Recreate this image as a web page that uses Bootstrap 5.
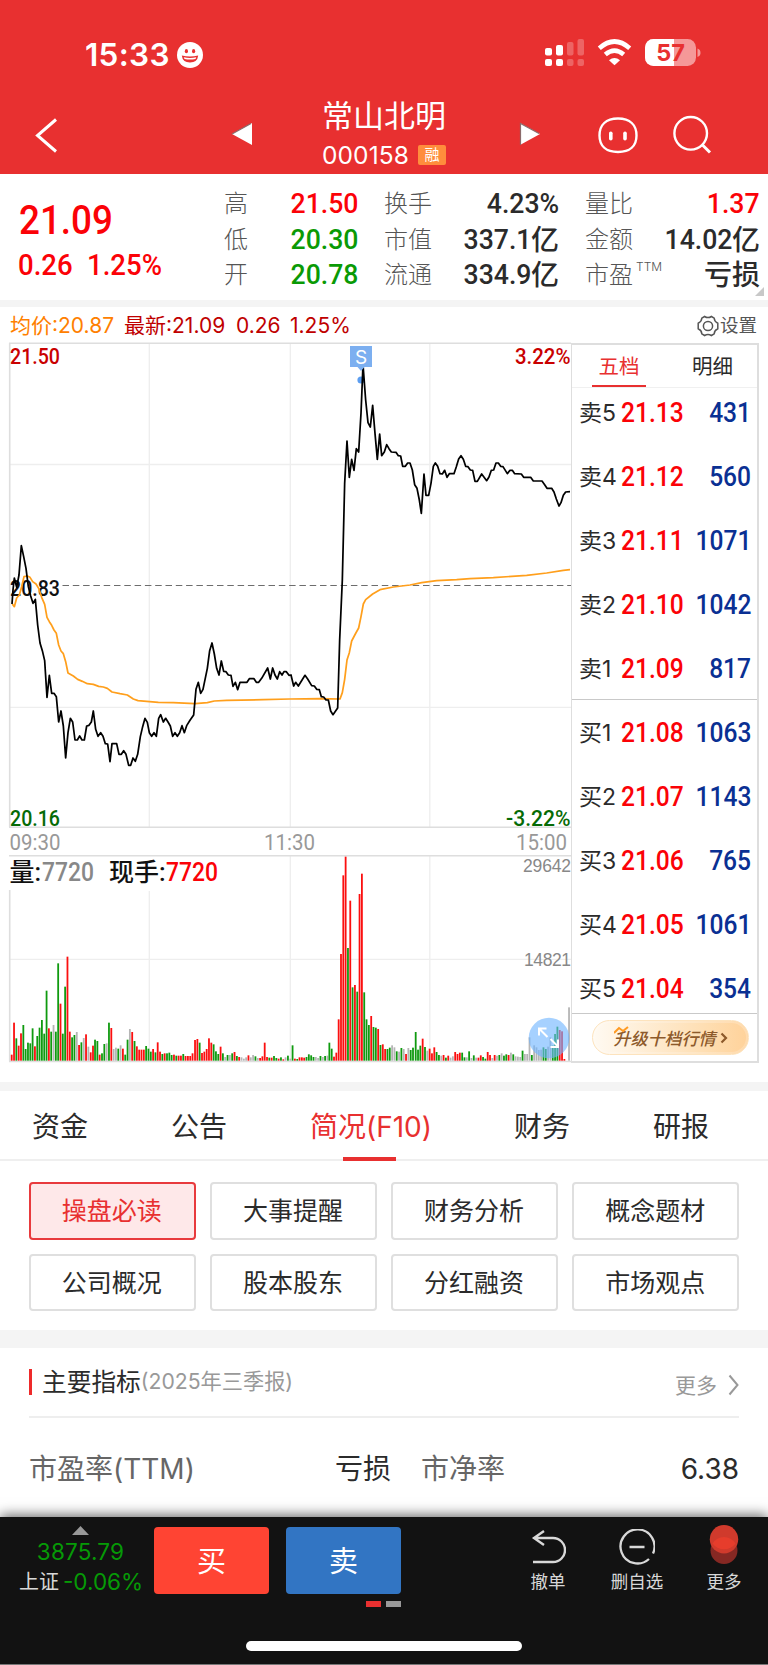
<!DOCTYPE html>
<html lang="zh-CN">
<head>
<meta charset="utf-8">
<meta name="viewport" content="width=device-width, initial-scale=1">
<title>常山北明 000158</title>
<link href="https://cdn.jsdelivr.net/npm/bootstrap@5.3.0/dist/css/bootstrap.min.css" rel="stylesheet">
<style>
  body { font-family: Inter, "Noto Sans CJK SC", sans-serif; color: #2b2b2b; background: #fff; width: 768px; height: 1665px; overflow: hidden; line-height: 1; }
  svg { display: block; flex: none; }
  svg text { font-family: Roboto, "Noto Sans CJK SC", sans-serif; }
  .din { font-family: Roboto, "Noto Sans CJK SC", sans-serif; font-weight: 500; display: inline-block; transform: scaleX(.95); transform-origin: right; white-space: nowrap; }
  .din-left { transform-origin: left; }
  .up { color: #fb0207; }
  .down { color: #0a9a05; }
  .topbar { height: 174px; background: #e83030; color: #fff; }
  .statusbar { height: 98px; padding: 3px 67px 0 85px; }
  .clock { font-size: 31.5px; font-weight: 600; letter-spacing: .3px; }
  .titlebar { height: 76px; }
  .stock-name { font-size: 31px; line-height: 36px; }
  .stock-code { font-size: 24.5px; line-height: 28px; letter-spacing: .1px; margin-top: 7px; }
  .margin-tag { width: 28px; height: 20px; background: #ff8d3c; border-radius: 2px; font-size: 15px; line-height: 19px; letter-spacing: 0; text-align: center; }
  .quote { height: 126px; }
  .price-now { font-size: 40px; line-height: 40px; font-weight: 500; transform: scaleX(.92); }
  .price-chg { font-size: 29px; line-height: 28px; }
  .stat-grid { display: grid; grid-template-columns: 134px 175px 175px; grid-auto-rows: 35.7px; column-gap: 26px; margin-top: 12px; }
  .stat-grid > div { display: flex; justify-content: space-between; align-items: center; white-space: nowrap; }
  .stat-grid .lbl { font-size: 24px; color: #555; font-weight: 300; }
  .stat-grid .val { font-size: 28px; font-weight: 500; display: flex; align-items: center; }
  .ttm { font-size: 12px; position: relative; top: -12px; margin-left: 3px; }
  .strip { background: #f4f4f4; }
  .chartinfo { height: 33px; font-size: 21px; padding: 4px 11px 0 10px; }
  .chart-row { height: 725px; }
  .book { width: 188px; height: 720px; margin-top: 3px; border: 2px solid #dedede; border-left-width: 1px; }
  .book-tabs { height: 43px; border-bottom: 1px solid #f0f0f0; font-size: 20.5px; }
  .book-tabs .on { color: #e83030; border-bottom: 2px solid #e83030; width: 54px; height: 42px; }
  .book-tabs span { line-height: 43px; text-align: center; }
  .book-half { height: 312px; border-bottom: 1px solid #c9c9c9; }
  .book-line { height: 64.1px; padding: 2px 6px 0 7px; }
  .book-line .who { width: 42px; font-size: 23px; }
  .book-line .din { font-size: 27px; transform: scaleX(.91); }
  .qty { color: #0a3093; }
  .upgrade { width: 157px; height: 35px; border-radius: 18px; background: linear-gradient(90deg,#fffaf2,#fedfb4 70%,#ffd29a); border: 1px solid #fde3bd; color: #8d5a2b; font-size: 17px; font-weight: 500; box-shadow: inset 0 0 0 2px #fff3; }
  .seg-tabs { height: 70px; border-bottom: 2px solid #efefef; font-size: 28px; display: grid; grid-template-columns: 120px 158px 186px 156px 122px; padding-left: 0; }
  .seg-tabs span { display: flex; justify-content: center; align-items: center; position: relative; height: 69px; padding-top: 3px; white-space: nowrap; }
  .seg-tabs .on { color: #e83030; }
  .seg-tabs .on::after { content: ""; position: absolute; left: 50%; margin-left: -28px; bottom: -1px; width: 53px; height: 4px; background: #e83030; }
  .pills { display: grid; grid-template-columns: repeat(4, 1fr); gap: 14px 14.5px; padding: 21px 29px 0; height: 169px; align-content: start; }
  .pills .btn { height: 57.5px; border: 2px solid #dfdfdf; border-radius: 4px; font-size: 25px; line-height: 1; padding: 2px 1px 0 0; color: #2b2b2b; background: #fff; }
  .pills .btn.on { border-color: #e83a3d; background: #fee8e9; color: #e83030; }
  .sec-head { height: 70px; margin: 0 29px; border-bottom: 2px solid #eee; }
  .redbar { width: 3px; height: 26px; background: #ee2a2a; }
  .metric { height: 99px; padding: 2px 29px 0; font-size: 28px; }
  .soft { color: #666; }
  .bottombar { height: 148px; background: #121212; box-shadow: 0 -2px 12px rgba(0,0,0,.6); position: relative; color: #d8d8d8; border-bottom: 1px solid #777; }
  .idx { width: 154px; font-size: 22.5px; }
  .trade { width: 115px; height: 67px; border-radius: 4px; color: #fff; font-size: 29px; line-height: 69px; text-align: center; }
  .tool { font-size: 17.5px; white-space: nowrap; }
  .home { width: 276px; height: 10px; border-radius: 5px; background: #fff; }
</style>
</head>
<body>
<header class="topbar">
  <div class="statusbar d-flex align-items-center justify-content-between">
    <div class="d-flex align-items-center pt-2">
      <span class="clock">15:33</span>
      <svg style="margin-left:7px" width="26" height="26" viewBox="0 0 26 26"><circle cx="13" cy="13" r="13" fill="#fff"/><ellipse cx="9.400" cy="9.200" rx="1.600" ry="2.100" fill="#e83030"/><ellipse cx="16.600" cy="9.200" rx="1.600" ry="2.100" fill="#e83030"/><path d="M4.800 13.500q8.200 1.800 16.400 0q-.8 7-8.200 7t-8.200-7z" fill="#e83030"/><path d="M6.700 15.300q6.300 1.200 12.600 0l-.8 1.800q-5.500 1-11 0z" fill="#fff"/></svg>
    </div>
    <svg class="mt-1" width="156" height="28" viewBox="545 38 156 28">
      <g fill="#fff"><rect x="545" y="47" width="7" height="7.500" rx="2"/><rect x="556" y="44" width="7" height="10.500" rx="2"/><rect x="545" y="58" width="7" height="7" rx="2"/><rect x="556" y="58" width="7" height="7" rx="2"/>
      <g opacity=".25"><rect x="567" y="41" width="6.500" height="13.500" rx="2"/><rect x="577.500" y="38" width="6.500" height="16.500" rx="2"/><rect x="567" y="58" width="6.500" height="7" rx="2"/><rect x="577.500" y="58" width="6.500" height="7" rx="2"/></g></g>
      <g fill="none" stroke="#fff" stroke-width="4.600"><path d="M599.300 47.200Q614.500 33.800 629.700 47.200"/><path d="M605.300 53.600Q614.500 45.600 623.700 53.600"/></g>
      <path d="M609 59.200q5.500-4.600 11 0l-5.500 5z" fill="#fff"/>
      <rect x="645" y="38" width="51" height="27" rx="8.500" fill="#f59898"/><path d="M674 38v27h-20.500a8.500 8.500 0 0 1-8.500-8.500v-10a8.500 8.500 0 0 1 8.500-8.500z" fill="#fff"/><path d="M697.500 47.500q3 1 3 4.200t-3 4.200z" fill="#f59898"/>
      <text x="670.500" y="60" text-anchor="middle" font-size="23.500" font-weight="700" fill="#e83030" style="font-family:Inter">57</text>
    </svg>
  </div>
  <div class="titlebar d-flex">
    <svg width="300" height="76" viewBox="0 98 300 76"><path d="M56 119.500L37.500 135.500L56 151.500" fill="none" stroke="#fff" stroke-width="3"/><path d="M232 134L252 123V145z" fill="#fff"/><path d="M232 134L251 123.500" stroke="#8b6a6a" stroke-width="1.200"/></svg>
    <div class="text-center" style="width:168px">
      <div class="stock-name">常山北明</div>
      <div class="stock-code d-flex justify-content-center align-items-center" style="gap:9px"><span>000158</span><span class="margin-tag">融</span></div>
    </div>
    <svg width="300" height="76" viewBox="468 98 300 76"><path d="M520 123L540 134L520 145z" fill="#fff"/><path d="M520.500 145V123.500L539 133.500" fill="none" stroke="#8b6a6a" stroke-width="1.200"/>
      <g fill="none" stroke="#fff" stroke-width="2.400"><path d="M618 118.500c12 0 18.500 6.500 18.500 17S630 152 618 152s-18.500-6-18.500-16.500 6.500-17 18.500-17z"/><circle cx="690.700" cy="133.300" r="16.300"/><path d="M702 144.500L710 152.500" stroke-width="3"/></g>
      <rect x="609" y="131.500" width="3.600" height="9" rx="1.800" fill="#fff"/><rect x="623.200" y="131.500" width="3.600" height="9" rx="1.800" fill="#fff"/></svg>
  </div>
</header>

<section class="quote d-flex position-relative">
  <div style="width:224px" class="ps-3">
    <div class="din din-left up price-now" style="margin:27px 0 0 3px">21.09</div>
    <div class="up price-chg d-flex" style="margin:10px 0 0 2px"><span class="din din-left" style="width:69px">0.26</span><span class="din din-left">1.25%</span></div>
  </div>
  <div class="stat-grid">
    <div><span class="lbl">高</span><span class="val up"><span class="din">21.50</span></span></div>
    <div><span class="lbl">换手</span><span class="val"><span class="din">4.23%</span></span></div>
    <div><span class="lbl">量比</span><span class="val up"><span class="din">1.37</span></span></div>
    <div><span class="lbl">低</span><span class="val down"><span class="din">20.30</span></span></div>
    <div><span class="lbl">市值</span><span class="val"><span class="din">337.1</span>亿</span></div>
    <div><span class="lbl">金额</span><span class="val"><span class="din">14.02</span>亿</span></div>
    <div><span class="lbl">开</span><span class="val down"><span class="din">20.78</span></span></div>
    <div><span class="lbl">流通</span><span class="val"><span class="din">334.9</span>亿</span></div>
    <div><span class="lbl">市盈<span class="ttm">TTM</span></span><span class="val">亏损</span></div>
  </div>
  <svg class="position-absolute bottom-0 end-0" width="13" height="13"><path d="M9 0V9H0z" fill="#c8c8c8"/></svg>
</section>
<div class="strip" style="height:7px"></div>

<div class="chartinfo d-flex align-items-center">
  <span style="color:#ff8000;width:114px">均价:20.87</span>
  <span style="color:#c00000;width:112px">最新:21.09</span>
  <span style="color:#c00000;width:54px">0.26</span>
  <span style="color:#c00000">1.25%</span>
  <span class="ms-auto d-flex align-items-center" style="font-size:18.500px;color:#555">
    <svg width="24" height="24" viewBox="0 0 24 24" fill="none" stroke="#555" stroke-width="1.500"><path d="M8.600 2.500Q12 4.600 15.400 2.500L18.200 4.200Q18.400 7.600 21.800 9.200V14.800Q18.400 16.400 18.200 19.800L15.400 21.500Q12 19.400 8.600 21.500L5.800 19.800Q5.600 16.400 2.200 14.800V9.200Q5.600 7.600 5.800 4.200z"/><circle cx="12" cy="12" r="4.600"/></svg>设置</span>
</div>

<main class="chart-row d-flex">
  <svg width="571" height="725" viewBox="0 340 571 725">
    <g stroke="#eee" stroke-width="1.300" fill="none"><path d="M149.300 343V827M290.300 343V827M429.800 343V827M149.300 891V1061M290.300 856V1061M429.800 856V1061M10 464.500H571M10 707.300H571M10 959.300H571"/></g>
    <g stroke="#dedede" stroke-width="1.600" fill="none"><path d="M9 343.300H571M9.700 343V827M9.700 890V1061.500M9 827.200H571M9 855.700H571M9 1061.500H571"/></g>
    <path d="M62.500 585.500H571" stroke="#6d6d6d" stroke-width="1.100" stroke-dasharray="6.500 3.800"/>
    <g font-size="21.500" font-weight="500">
      <text x="10" y="364" textLength="50" lengthAdjust="spacingAndGlyphs" fill="#c90000">21.50</text>
      <text x="10" y="595.500" textLength="50" lengthAdjust="spacingAndGlyphs" fill="#111">20.83</text>
      <text x="10" y="825.500" textLength="50" lengthAdjust="spacingAndGlyphs" fill="#066b06">20.16</text>
      <text x="515" y="364" textLength="55.500" lengthAdjust="spacingAndGlyphs" fill="#c90000">3.22%</text>
      <text x="506" y="825.500" textLength="64.500" lengthAdjust="spacingAndGlyphs" fill="#066b06">-3.22%</text>
      <g fill="#999" font-weight="400"><text x="9.500" y="850" textLength="51" lengthAdjust="spacingAndGlyphs">09:30</text><text x="264" y="850" textLength="51" lengthAdjust="spacingAndGlyphs">11:30</text><text x="516" y="850" textLength="51" lengthAdjust="spacingAndGlyphs">15:00</text></g>
    </g>
    <circle cx="361" cy="380" r="3.600" fill="#5b9df0"/>
    <g fill="none" stroke-width="5.200" stroke-linejoin="round" transform="translate(0 340) scale(.33333)">
      <path stroke="#ff9f1c" d="M37 792L43 800 50 774 58 765 65 740 72 710 82 708 90 712 98 725 108 732 116 745 125 772 134 793 141 832 148 845 155 856 162 870 169 880 176 915 183 933 190 941 197 965 204 999 220 1008 233 1018 247 1024 262 1031 280 1033 296 1039 310 1041 322 1045 336 1056 360 1061 382 1065 400 1077 414 1082 440 1084 475 1087 520 1088 585 1091 622 1088 643 1083 680 1081 790 1079 870 1077 960 1076 1020 1077 1027 1058 1034 1018 1041 960 1048 938 1055 903 1066 882 1076 864 1083 830 1090 792 1097 779 1118 762 1140 749 1180 741 1230 735 1265 728 1310 722 1370 719 1410 716 1480 713 1580 706 1640 699 1690 691 1710 689"/>
      <path stroke="#000" d="M36 792L39 750 43 714 50 742 57 705 64 617 71 650 78 685 85 740 92 768 99 790 106 778 113 855 120 909 127 932 134 962 141 1072 148 1006 155 1060 162 1060 169 1070 176 1146 183 1113 190 1158 197 1254 204 1178 211 1135 218 1146 225 1200 232 1200 239 1188 246 1200 253 1200 260 1158 267 1156 274 1146 280 1113 287 1168 294 1189 302 1178 309 1189 316 1211 323 1212 330 1265 336 1211 350 1211 357 1243 364 1243 371 1232 378 1243 386 1276 392 1276 399 1254 406 1264 413 1243 421 1190 428 1160 435 1135 442 1147 448 1178 455 1189 462 1178 469 1189 476 1135 482 1124 490 1146 497 1135 504 1146 511 1158 518 1189 525 1178 532 1189 539 1178 546 1157 553 1178 560 1157 570 1141 581 1125 588 1048 595 1027 602 1060 609 1048 622 985 629 932 636 909 643 942 650 985 657 1005 664 963 671 994 678 995 685 1005 693 1006 699 1039 706 1027 713 1049 720 1027 741 1027 748 1016 762 1016 769 1027 776 1027 785 1015 803 984 811 1017 818 984 825 1005 832 1017 839 995 846 1005 852 995 859 995 867 1006 873 1005 881 1038 887 1027 895 1038 915 1006 923 1017 935 1037 943 1038 950 1048 958 1049 964 1070 971 1071 978 1080 985 1080 992 1113 999 1124 1013 1104 1019 900 1027 720 1034 430 1041 303 1048 412 1055 358 1062 391 1069 326 1076 336 1083 220 1089 74 1097 180 1104 248 1111 261 1118 196 1125 280 1132 358 1139 282 1145 347 1153 336 1160 314 1167 326 1174 336 1188 337 1195 347 1202 348 1208 379 1216 379 1223 369 1230 369 1237 390 1244 434 1251 445 1258 480 1264 520 1272 402 1278 466 1286 466 1293 430 1300 379 1306 369 1313 379 1320 401 1327 402 1334 391 1341 412 1348 401 1362 401 1369 380 1376 357 1383 347 1390 358 1397 379 1404 380 1411 390 1418 391 1425 424 1432 424 1445 402 1460 422 1467 411 1474 391 1481 390 1488 369 1495 369 1502 379 1509 380 1522 401 1530 391 1537 391 1544 401 1564 402 1571 412 1592 412 1600 423 1626 423 1634 434 1641 445 1655 445 1662 456 1669 477 1677 498 1683 488 1690 466 1697 456 1710 455"/>
    </g>
    <path d="M350 346h22v21h-7.500l-3.500 4-3.500-4h-7.500z" fill="#7caff0"/><text x="361" y="363.500" text-anchor="middle" font-size="19" fill="#fff" style="font-family:Inter">S</text>
    <rect x="11" y="858" width="210" height="32" fill="#fff"/>
    <g font-size="25" font-weight="500"><text x="9.500" y="880.500" fill="#111">量:</text><text x="42" y="880.500" fill="#888" textLength="52" lengthAdjust="spacingAndGlyphs">7720</text><text x="109" y="880.500" fill="#111">现手:</text><text x="166" y="880.500" fill="#fb0207" textLength="52" lengthAdjust="spacingAndGlyphs">7720</text></g>
    <g font-size="17.500" fill="#888"><text x="523" y="871.500" textLength="48" style="font-family:'Liberation Sans'">29642</text><text x="524" y="966" textLength="47" style="font-family:'Liberation Sans'">14821</text></g>
    <g id="volume" transform="translate(0 830) scale(.33333)"></g>
    <g><circle cx="549" cy="1038" r="20.300" fill="#6fb4ff" fill-opacity=".62"/><path d="M539 1035.500V1028.500H546.500M539.500 1029L547.500 1037M550.500 1039L558 1046.500M558 1039.500V1047H550.500" fill="none" stroke="#fff" stroke-width="2"/></g>
  </svg>

  <aside class="book">
    <div class="book-tabs d-flex"><span class="on" style="margin-left:20px">五档</span><span style="margin-left:46px">明细</span></div>
    <div class="book-half" style="margin-top:-8px;height:320px" id="asks"></div>
    <div class="book-half" style="height:314px" id="bids"></div>
    <div class="upgrade d-flex align-items-center justify-content-center position-relative" style="margin:6px 0 0 20px"><svg class="position-absolute" style="left:21px;top:5px" width="16" height="8" viewBox="0 0 16 8"><path d="M0 7L5 2L9 5L14 1" fill="none" stroke="#ff9a22" stroke-width="2"/></svg><i class="pt-1">升级十档行情</i>
      <svg class="ms-1" width="8" height="12" viewBox="0 0 8 12"><path d="M1.500 1.500L6 6L1.500 10.500" fill="none" stroke="#8d5a2b" stroke-width="2.200"/></svg></div>
  </aside>
</main>

<div class="strip" style="height:9px;margin-top:17px"></div>
<nav class="seg-tabs"><span>资金</span><span>公告</span><span class="on">简况(F10)</span><span>财务</span><span>研报</span></nav>
<div class="pills">
  <button class="btn on">操盘必读</button><button class="btn">大事提醒</button><button class="btn">财务分析</button><button class="btn">概念题材</button>
  <button class="btn">公司概况</button><button class="btn">股本股东</button><button class="btn">分红融资</button><button class="btn">市场观点</button>
</div>
<div class="strip" style="height:18px"></div>
<div class="sec-head d-flex align-items-center">
  <span class="redbar"></span><span style="font-size:24.700px;margin-left:10px">主要指标</span><span style="font-size:21.200px;color:#999">(2025年三季报)</span>
  <span class="ms-auto d-flex align-items-center" style="font-size:21px;color:#999;padding-top:6px">更多<svg style="margin-left:11px" width="11" height="22" viewBox="0 0 11 22"><path d="M1.500 1.500L9.500 11L1.500 20.500" fill="none" stroke="#999" stroke-width="2"/></svg></span>
</div>
<div class="metric d-flex align-items-center">
  <span class="soft" style="width:306px">市盈率(TTM)</span><span>亏损</span><span class="soft" style="margin-left:30px">市净率</span><span class="ms-auto">6.38</span>
</div>

<footer class="bottombar">
  <div class="d-flex" style="height:89px">
    <div class="idx text-center">
      <svg style="margin:9px auto 0 72px" width="17" height="9"><path d="M8.500 0L17 9H0z" fill="#999"/></svg>
      <div style="color:#069a06;margin:6px 0 0 7px;letter-spacing:.2px">3875.79</div>
      <div class="d-flex align-items-center" style="margin:7px 0 0 19px"><span style="font-size:20px;width:44px;text-align:left">上证</span><span style="color:#069a06">-0.06%</span></div>
    </div>
    <div class="trade" style="background:#ff4433;margin-top:10px">买</div>
    <div class="trade" style="background:#3275c3;margin:10px 0 0 17px">卖</div>
    <div class="tool text-center" style="width:80px;margin-left:107px">
      <svg style="margin:12px auto 0" width="36" height="36" viewBox="530 1529 36 36"><path d="M544 1531L534 1538L544 1545M534 1538H553A11.800 11.800 0 0 1 553 1562H533" fill="none" stroke="#d8d8d8" stroke-width="2.400"/></svg><div style="margin-top:8px">撤单</div></div>
    <div class="tool text-center" style="width:98px">
      <svg style="margin:12px auto 0" width="36" height="36" viewBox="0 0 36 36"><path d="M34 24.500A17 17 0 1 0 30 30M10.500 18H25.500" fill="none" stroke="#d8d8d8" stroke-width="2.300"/></svg><div style="margin-top:8px">删自选</div></div>
    <div class="tool text-center" style="width:76px">
      <svg style="margin:8px auto 0" width="30" height="40" viewBox="0 0 30 40"><circle cx="15" cy="25.500" r="13.500" fill="#862823"/><circle cx="15" cy="14.300" r="14.200" fill="#d03a2c"/><path d="M3.500 18.500A13.500 13.500 0 0 1 26.500 18.500A14.200 14.200 0 0 1 3.500 18.500z" fill="#e63d2c"/></svg><div style="margin-top:8px">更多</div></div>
  </div>
  <div class="d-flex" style="padding-left:366px;gap:5px;margin-top:-5px"><i style="width:15px;height:6px;background:#e83030"></i><i style="width:15px;height:6px;background:#999"></i></div>
  <div class="home mx-auto" style="margin-top:34px"></div>
</footer>

<script src="https://cdn.jsdelivr.net/npm/bootstrap@5.3.0/dist/js/bootstrap.bundle.min.js"></script>
<script>
  // order book
  const line = (w, p, q) => `<div class="book-line d-flex align-items-center"><span class="who">${w}</span><span class="din din-left up">${p}</span><span class="din qty ms-auto">${q}</span></div>`;
  document.getElementById('asks').innerHTML = [['卖5','21.13',431],['卖4','21.12',560],['卖3','21.11',1071],['卖2','21.10',1042],['卖1','21.09',817]].map(r => line(...r)).join('');
  document.getElementById('bids').innerHTML = [['买1','21.08',1063],['买2','21.07',1143],['买3','21.06',765],['买4','21.05',1061],['买5','21.04',354]].map(r => line(...r)).join('');

  // minute volume: each segment is [first bar x, "height+colour ..."], r rise, g fall, y flat
  const segs = [
    [35, '18r 114r 67g 45r 82r 107g 35g 54g 52g 97g 43r 74g 99g 122g 81g 210g 97r 87g 107y 87g 292g 171r 81g 222g 312r 87r 70g 77g 86y 47r 55g 68y 79r 42y 25r 45r'],
    [285, '63g 59g 18r 22g 50g 52y 114g 98r 35y 39y 36g 46y 36r 18g 63g 95y 86r 59g 43r 33r 33r 33r 44g 36g 27g 35r 25g'],
    [473, '55r 27r 20g 22r 22g 24g 17g 18r 15g 15r 15r 20g 14r 14r 14r 22r'],
    [585, '62r 65r 54g 23r 27r 35r 67r 54r 49g 28g 20g 42r 22g 11y 17g 17y 22g 26r 14g 11r 10y 6y 10y 16r 10y 17y 13g 8y 8r 13r'],
    [794, '54r 11r 9g 9r 14g 8g 6r 10g 4r 10y 15g 6y 46g 6r 5g 10r 10r 9r 11g 19g 16g 11g 11y 8y 14g 11y 14g 15y'],
    [988, '54g 36g 12r 24r 124r 320r 556r 612r 338g 480r 220g 227r 207g 500r 561r 205g 124g 107g 134r 101g 99g 95r 47g 49r 35r 35g 39g 46y 40y 28g 27y 38g 35y 20r 38y 32g 39g'],
    [1247, '86g 33g 45g 66r 41g 30y 36r 22r 40r 26g 17g 15y 17r 9g 15r 9y 13y 26r 20r 24r 24g 10g 10y 28g 8y 16g 9y 9r 16r 11g 6g'],
    [1463, '26r 17r 8y 17r 15y 17g 22y 15g 19g 17r 24y 19g 13y 12y 11y 30g 20y 20y 70y 17g 46y 40y 32y 33y 40g 35g 42y 70y 45g 80g 102g 92r 88r 5r 0y 160y']
  ];
  const tint = { r: '#fb0f0f', g: '#0f9a0f', y: '#b5b5b5' };
  document.getElementById('volume').innerHTML = segs.map(([x, s]) => s.split(' ').map((b, i) => {
    const h = parseInt(b);
    return `<rect x="${(x + i * 6.97 - 2.6).toFixed(1)}" y="${692 - h}" width="5.4" height="${h}" fill="${tint[b.slice(-1)]}"/>`;
  }).join('')).join('');
</script>
</body>
</html>
